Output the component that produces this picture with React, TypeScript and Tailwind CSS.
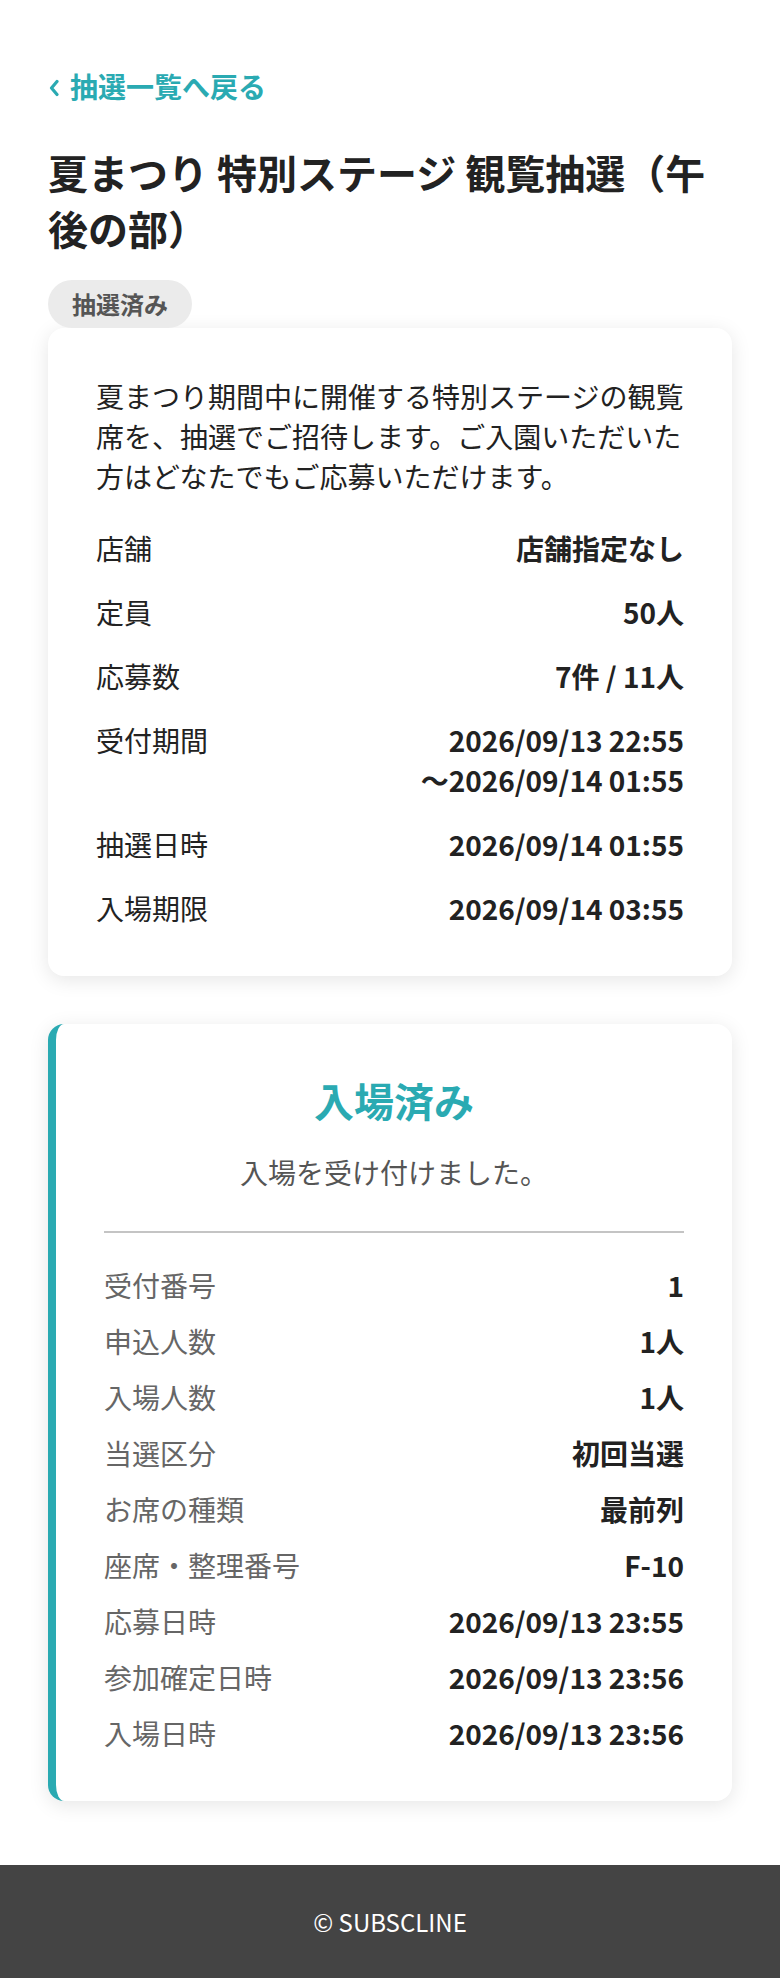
import { ReactNode } from "react";

const font = { fontFamily: '"Noto Sans CJK JP", "Noto Sans", sans-serif' };

function InfoRow({ label, children }: { label: string; children: ReactNode }) {
  return (
    <div className="flex justify-between gap-6 text-[28px] leading-[40px]">
      <span className="shrink-0 text-[#222]">{label}</span>
      <span className="text-right font-bold text-[#222]">{children}</span>
    </div>
  );
}

function ResultRow({ label, value }: { label: string; value: string }) {
  return (
    <div className="flex justify-between py-2 text-[28px] leading-[40px]">
      <span className="text-[#666]">{label}</span>
      <span className="font-bold text-[#222]">{value}</span>
    </div>
  );
}

export default function App() {
  const results = [
    ["受付番号", "1"],
    ["申込人数", "1人"],
    ["入場人数", "1人"],
    ["当選区分", "初回当選"],
    ["お席の種類", "最前列"],
    ["座席・整理番号", "F-10"],
    ["応募日時", "2026/09/13 23:55"],
    ["参加確定日時", "2026/09/13 23:56"],
    ["入場日時", "2026/09/13 23:56"],
  ];

  return (
    <div className="flex min-h-screen flex-col bg-white" style={font}>
      <main className="flex-1 px-12 pt-[66px] pb-16">
        {/* Back link */}
        <a className="flex items-center text-[28px] font-bold leading-[40px] text-[#2aaab2]">
          <svg width="10" height="18" viewBox="0 0 10 18" className="ml-[1px] mr-[11px] mt-[4px]">
            <polyline points="8,2.5 2.5,9 8,15.5" fill="none" stroke="currentColor" strokeWidth="3.2" strokeLinecap="round" strokeLinejoin="round" />
          </svg>
          <span>抽選一覧へ戻る</span>
        </a>

        {/* Title */}
        <h1 className="mt-[38px] text-[40px] font-bold leading-[56px] text-[#222]">
          夏まつり 特別ステージ 観覧抽選（午後の部）
        </h1>

        <div className="mt-6">
          <span className="inline-block rounded-full bg-[#ebebeb] px-6 py-[6px] text-[24px] font-bold leading-[36px] text-[#555]">
            抽選済み
          </span>
        </div>

        {/* Lottery info */}
        <section className="rounded-2xl bg-white p-12 shadow-[0_4px_20px_rgba(0,0,0,0.10)]">
          <p className="text-[28px] leading-[40px] text-[#222]">
            夏まつり期間中に開催する特別ステージの観覧席を、抽選でご招待します。ご入園いただいた方はどなたでもご応募いただけます。
          </p>
          <div className="mt-8 flex flex-col gap-6">
            <InfoRow label="店舗">店舗指定なし</InfoRow>
            <InfoRow label="定員">50人</InfoRow>
            <InfoRow label="応募数">7件 / 11人</InfoRow>
            <InfoRow label="受付期間">
              2026/09/13 22:55
              <br />
              〜2026/09/14 01:55
            </InfoRow>
            <InfoRow label="抽選日時">2026/09/14 01:55</InfoRow>
            <InfoRow label="入場期限">2026/09/14 03:55</InfoRow>
          </div>
        </section>

        {/* Entry result */}
        <section className="mt-12 rounded-2xl border-l-8 border-[#2aaab2] bg-white px-12 pt-12 pb-10 shadow-[0_4px_20px_rgba(0,0,0,0.10)]">
          <h2 className="text-center text-[40px] font-bold leading-[56px] text-[#2aaab2]">入場済み</h2>
          <p className="mt-6 text-center text-[28px] leading-[40px] text-[#555]">入場を受け付けました。</p>
          <hr className="mt-[39px] mb-6 border-t-2 border-[#c4c4c4]" />
          <div className="flex flex-col">
            {results.map(([label, value]) => (
              <ResultRow key={label} label={label} value={value} />
            ))}
          </div>
        </section>
      </main>

      <footer className="flex h-[113px] items-center justify-center bg-[#444] text-[24px] text-white">
        © SUBSCLINE
      </footer>
    </div>
  );
}
